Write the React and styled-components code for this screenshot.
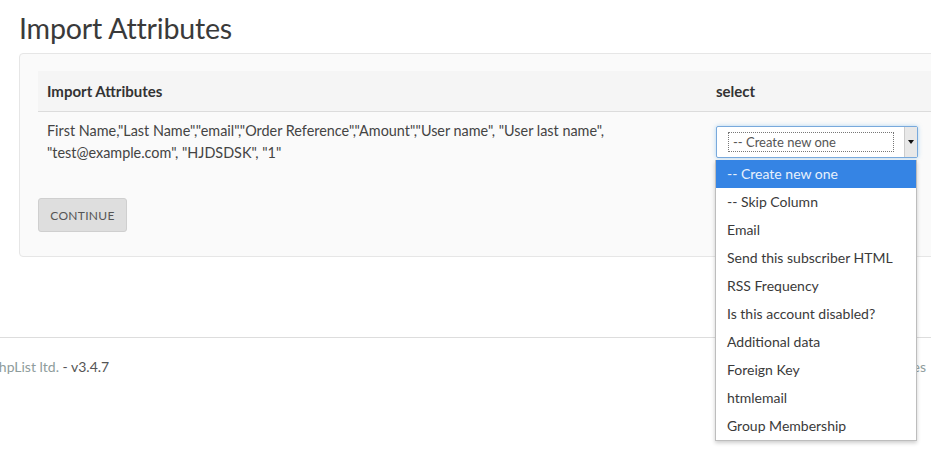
import React from "react";
import styled, { createGlobalStyle } from "styled-components";

const GlobalStyle = createGlobalStyle`
	html, body {
		margin: 0;
		padding: 0;
		background: #fff;
		overflow: hidden;
	}
	body {
		font-family: Lato, "Liberation Sans", sans-serif;
		color: #444;
	}
`;

const Page = styled.div`
	width: 931px;
	height: 474px;
	position: relative;
	overflow: hidden;
`;

const Content = styled.div`
	padding: 12px 0 0 19px;
`;

const Heading = styled.h1`
	margin: 0 0 9px;
	font-size: 28.6px;
	font-weight: 400;
	line-height: 32px;
	color: #3a3a3a;
	letter-spacing: -0.2px;
`;

const Panel = styled.div`
	width: 960px;
	background: #fafafa;
	border: 1px solid #e6e6e6;
	border-radius: 4px;
	padding: 17px 0 24px 18px;
	box-sizing: border-box;
`;

const Table = styled.div`
	display: grid;
	grid-template-columns: 669px 1fr;
`;

const HeadCell = styled.div`
	height: 40px;
	display: flex;
	align-items: center;
	padding: 0 9px;
	font-size: 15px;
	font-weight: 700;
	color: #333;
	background: #f5f5f5;
	border-bottom: 1px solid #dcdcdc;
`;

const Cell = styled.div`
	padding: 8px 9px;
	font-size: 14.4px;
	line-height: 22px;
	color: #444;
	position: relative;
`;

const SelectBox = styled.div`
	width: 202px;
	height: 32px;
	margin-top: 6px;
	box-sizing: border-box;
	border: 1px solid #78a9dc;
	border-radius: 2px;
	box-shadow: 0 0 4px rgba(102, 175, 233, 0.5);
	background: #fff;
	display: flex;
	align-items: center;
	padding-left: 11px;
`;

const FocusText = styled.div`
	width: 166px;
	height: 20px;
	box-sizing: border-box;
	border: 1px dotted #777;
	font-size: 13px;
	line-height: 18px;
	padding-left: 4px;
	color: #555;
`;

const Arrow = styled.div`
	margin-left: auto;
	width: 12px;
	height: 100%;
	border-left: 1px solid #ccc;
	background: #e8e8e8;
	display: flex;
	align-items: center;
	justify-content: center;
	&::after {
		content: "";
		border-left: 3px solid transparent;
		border-right: 3px solid transparent;
		border-top: 4px solid #111;
	}
`;

const Menu = styled.ul`
	position: absolute;
	left: 8px;
	top: 48px;
	width: 202px;
	margin: 0;
	padding: 0;
	list-style: none;
	background: #fff;
	border: 1px solid #bdbdbd;
	border-top: none;
	box-sizing: border-box;
	box-shadow: 0 2px 4px rgba(0, 0, 0, 0.2);
	z-index: 5;
`;

const Option = styled.li`
	height: 28px;
	line-height: 28px;
	padding-left: 11px;
	font-size: 14px;
	color: ${(p) => (p.$active ? "#e8f1fc" : "#3a3a3a")};
	background: ${(p) => (p.$active ? "#3584e4" : "transparent")};
	white-space: nowrap;
`;

const Button = styled.button`
	margin-top: 26px;
	width: 89px;
	height: 34px;
	background: #dedede;
	border: 1px solid #cfcfcf;
	border-radius: 3px;
	font-family: inherit;
	font-size: 12px;
	letter-spacing: 0.3px;
	color: #555;
	text-transform: uppercase;
`;

const Footer = styled.footer`
	margin-top: 80px;
	border-top: 1px solid #ddd;
	display: flex;
	justify-content: space-between;
	padding: 20px 5px 20px 0;
	font-size: 14px;
	color: #555;
	margin-left: -9px;
`;

const FooterLink = styled.span`
	color: #8e9c9c;
`;

const options = [
	"-- Create new one",
	"-- Skip Column",
	"Email",
	"Send this subscriber HTML",
	"RSS Frequency",
	"Is this account disabled?",
	"Additional data",
	"Foreign Key",
	"htmlemail",
	"Group Membership",
];

export default function App() {
	return (
		<Page>
			<GlobalStyle />
			<Content>
				<Heading>Import Attributes</Heading>
				<Panel>
					<Table>
						<HeadCell>Import Attributes</HeadCell>
						<HeadCell>select</HeadCell>
						<Cell>
							First Name,"Last Name","email","Order Reference","Amount","User name", "User last name",
							<br />
							"test@example.com", "HJDSDSK", "1"
						</Cell>
						<Cell>
							<SelectBox>
								<FocusText>-- Create new one</FocusText>
								<Arrow />
							</SelectBox>
							<Menu>
								{options.map((o, i) => (
									<Option key={o} $active={i === 0}>
										{o}
									</Option>
								))}
							</Menu>
						</Cell>
					</Table>
					<Button>Continue</Button>
				</Panel>
			</Content>
			<Footer>
				<span>
					<FooterLink>phpList ltd.</FooterLink> - v3.4.7
				</span>
				<FooterLink>Updates</FooterLink>
			</Footer>
		</Page>
	);
}
